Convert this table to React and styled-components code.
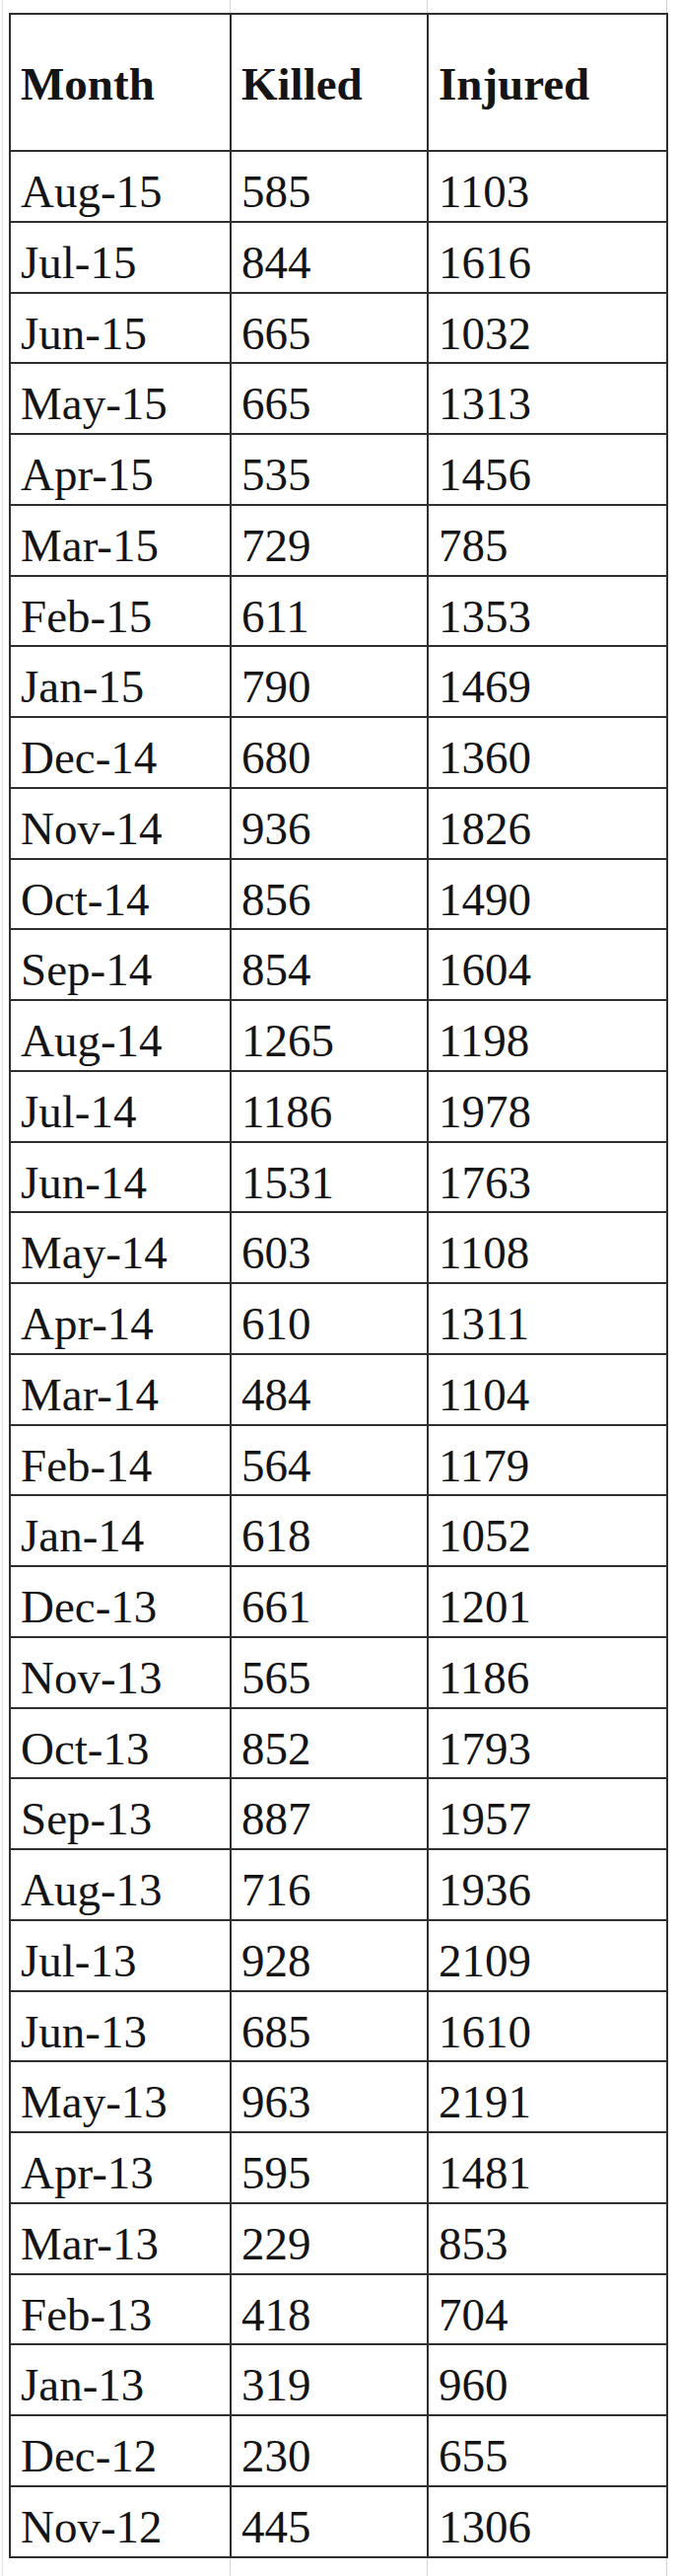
import React from 'react';
import styled, { createGlobalStyle } from 'styled-components';

const GlobalStyle = createGlobalStyle`
  body {
    margin: 0;
    background: #fff;
  }
`;

const rows = [
  ['Aug-15', '585', '1103'],
  ['Jul-15', '844', '1616'],
  ['Jun-15', '665', '1032'],
  ['May-15', '665', '1313'],
  ['Apr-15', '535', '1456'],
  ['Mar-15', '729', '785'],
  ['Feb-15', '611', '1353'],
  ['Jan-15', '790', '1469'],
  ['Dec-14', '680', '1360'],
  ['Nov-14', '936', '1826'],
  ['Oct-14', '856', '1490'],
  ['Sep-14', '854', '1604'],
  ['Aug-14', '1265', '1198'],
  ['Jul-14', '1186', '1978'],
  ['Jun-14', '1531', '1763'],
  ['May-14', '603', '1108'],
  ['Apr-14', '610', '1311'],
  ['Mar-14', '484', '1104'],
  ['Feb-14', '564', '1179'],
  ['Jan-14', '618', '1052'],
  ['Dec-13', '661', '1201'],
  ['Nov-13', '565', '1186'],
  ['Oct-13', '852', '1793'],
  ['Sep-13', '887', '1957'],
  ['Aug-13', '716', '1936'],
  ['Jul-13', '928', '2109'],
  ['Jun-13', '685', '1610'],
  ['May-13', '963', '2191'],
  ['Apr-13', '595', '1481'],
  ['Mar-13', '229', '853'],
  ['Feb-13', '418', '704'],
  ['Jan-13', '319', '960'],
  ['Dec-12', '230', '655'],
  ['Nov-12', '445', '1306'],
];

// sheet with faint gridlines continuing past the bordered table
const Sheet = styled.div`
  width: 690px;
  height: 2612px;
  box-sizing: border-box;
  padding: 13px 0 0 9px;
  background-image:
    linear-gradient(#d4d4d4, #d4d4d4),
    linear-gradient(#d4d4d4, #d4d4d4),
    linear-gradient(#d4d4d4, #d4d4d4),
    linear-gradient(#e2e2e2, #e2e2e2);
  background-size: 1px 100%, 1px 100%, 1px 100%, 1px 100%;
  background-position: 233px 0, 433px 0, 676px 0, 2px 0;
  background-repeat: no-repeat;
`;

const Table = styled.table`
  border-collapse: collapse;
  table-layout: fixed;
  width: 667px;
  background: #fff;
  font-family: 'Liberation Serif', 'Times New Roman', serif;
  color: #141414;
`;

const Head = styled.th`
  height: 139px;
  box-sizing: border-box;
  padding: 0 10px 40px;
  border: 2px solid #2e2e2e;
  text-align: left;
  vertical-align: bottom;
  font-size: 47px;
  font-weight: bold;
  line-height: 1.1;
`;

const Cell = styled.td`
  height: 71.75px;
  box-sizing: border-box;
  padding: 0 10px 3px;
  border: 2px solid #2e2e2e;
  vertical-align: bottom;
  font-size: 47px;
  line-height: 1.1;
  white-space: nowrap;
`;

export default function App() {
  return (
    <>
      <GlobalStyle />
      <Sheet>
        <Table>
          <colgroup>
            <col style={{ width: 224 }} />
            <col style={{ width: 200 }} />
            <col style={{ width: 243 }} />
          </colgroup>
          <thead>
            <tr>
              <Head>Month</Head>
              <Head>Killed</Head>
              <Head>Injured</Head>
            </tr>
          </thead>
          <tbody>
            {rows.map(([month, killed, injured]) => (
              <tr key={month}>
                <Cell>{month}</Cell>
                <Cell>{killed}</Cell>
                <Cell>{injured}</Cell>
              </tr>
            ))}
          </tbody>
        </Table>
      </Sheet>
    </>
  );
}
